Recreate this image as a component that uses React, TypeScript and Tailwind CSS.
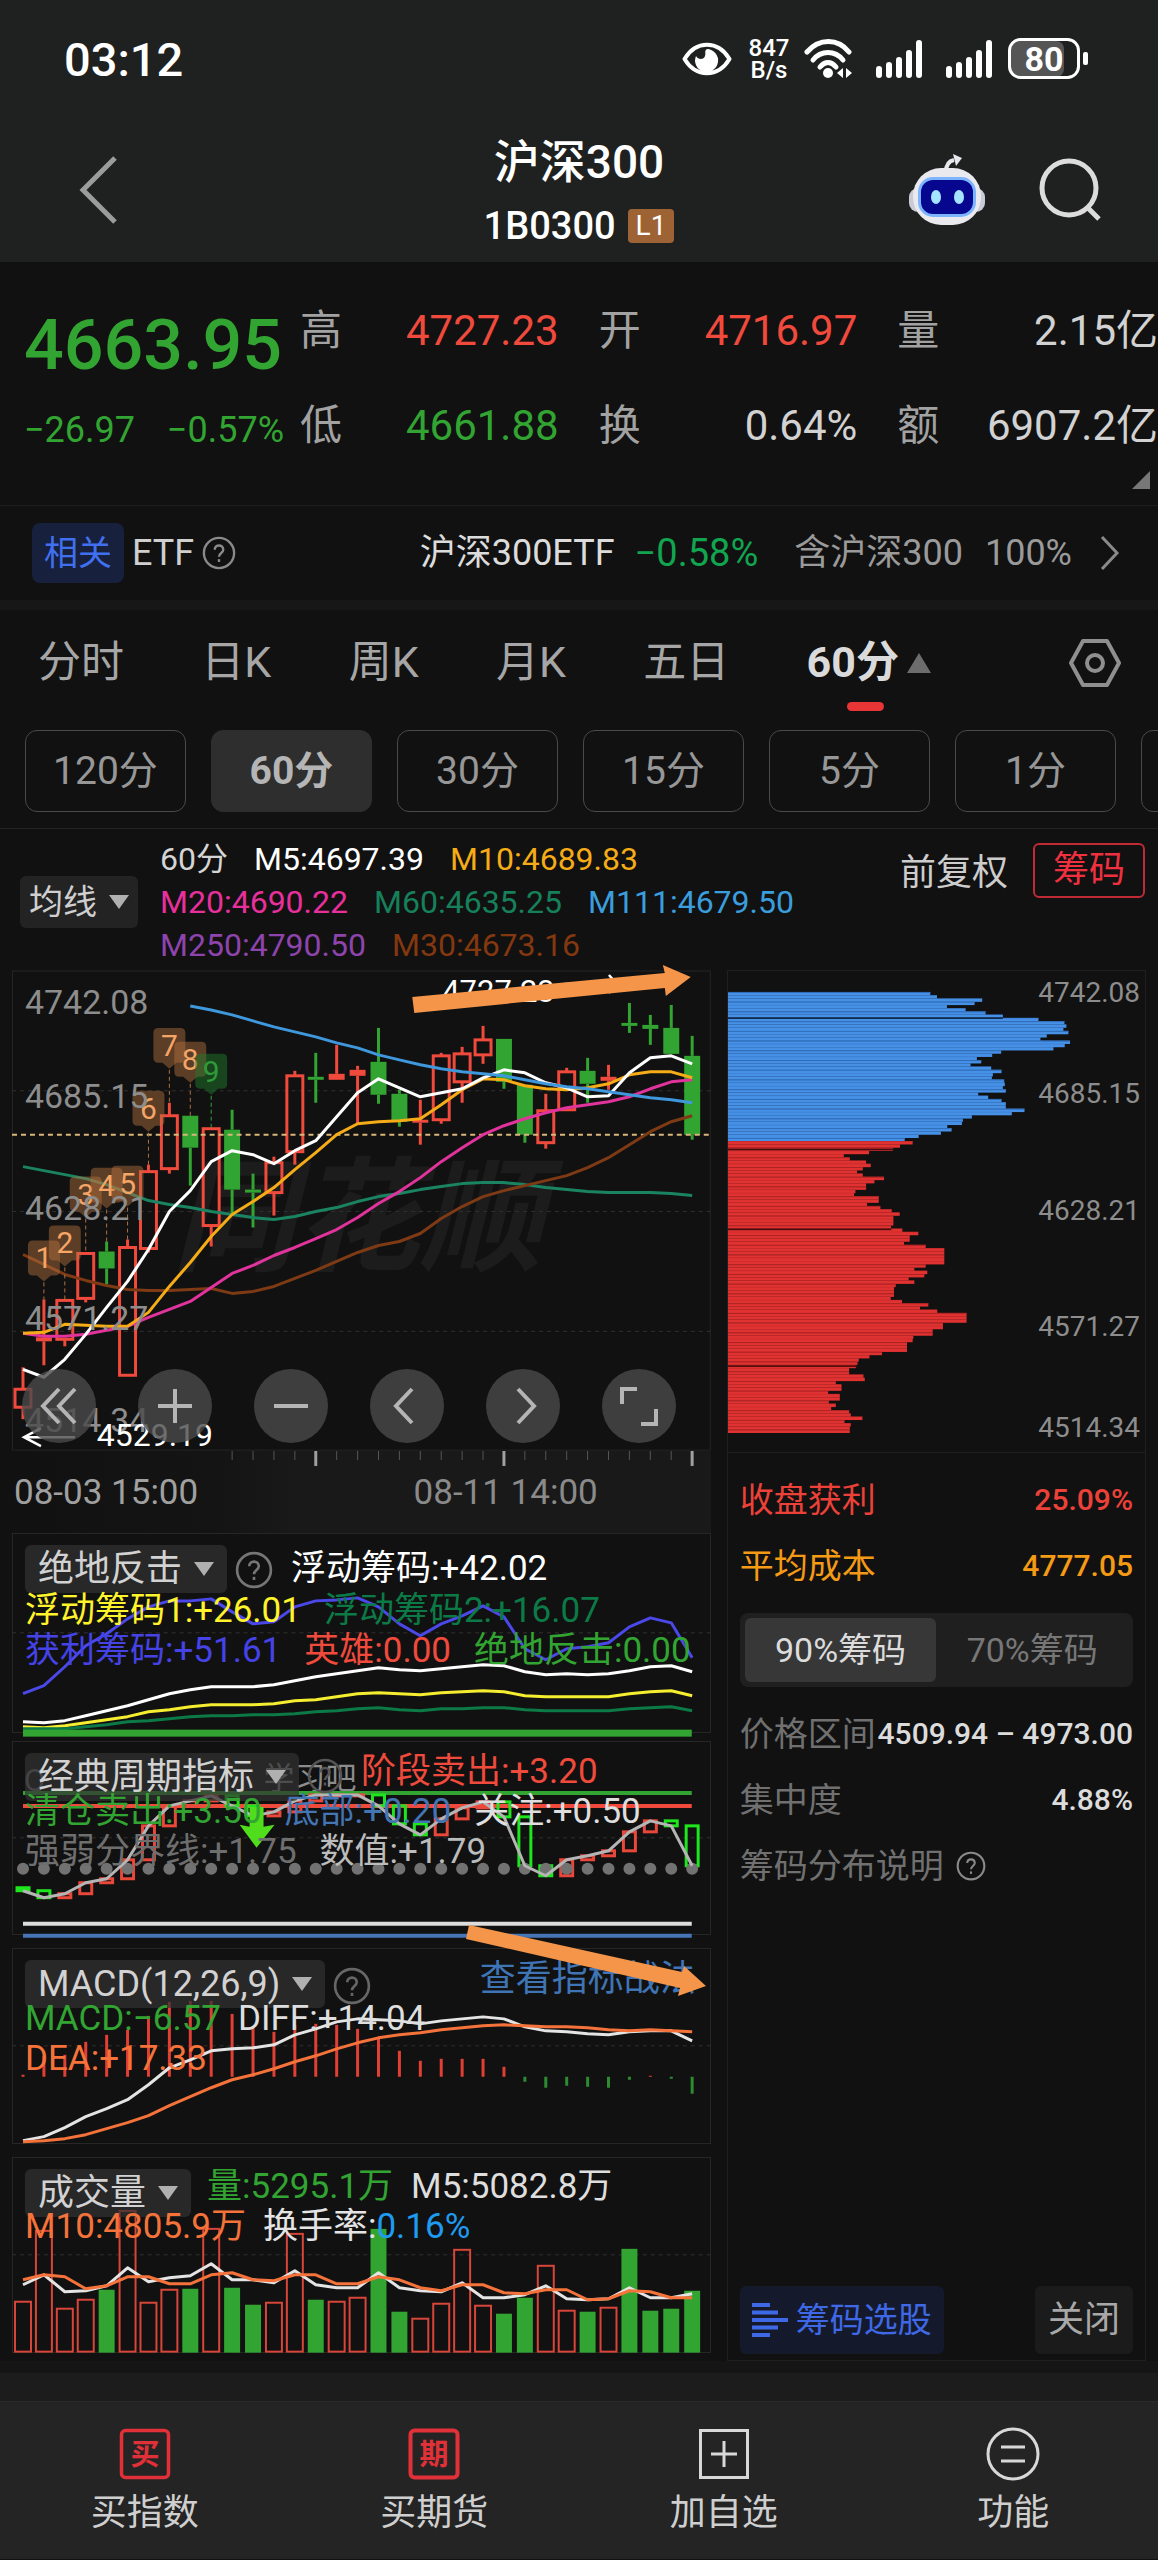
import type { ReactNode } from 'react'
import clsx from 'clsx'

const GREEN = '#32a432'
const RED = '#f04a3c'

type Candle = [high: number, top: number, bottom: number, low: number, kind: 'r' | 'g' | 'f']

// r = hollow up candle, g = solid down candle, f = flat up candle
const CANDLES: Candle[] = [
  [1368, 1390, 1408, 1420, 'r'],
  [1300, 1338, 1342, 1366, 'f'],
  [1300, 1301, 1340, 1347, 'r'],
  [1253, 1254, 1299, 1303, 'r'],
  [1242, 1252, 1269, 1285, 'g'],
  [1240, 1248, 1376, 1376, 'r'],
  [1165, 1172, 1249, 1253, 'r'],
  [1103, 1116, 1169, 1174, 'r'],
  [1116, 1116, 1148, 1186, 'g'],
  [1128, 1129, 1226, 1247, 'r'],
  [1110, 1130, 1190, 1215, 'g'],
  [1174, 1190, 1193, 1228, 'g'],
  [1157, 1163, 1193, 1216, 'r'],
  [1071, 1076, 1152, 1165, 'r'],
  [1053, 1077, 1080, 1103, 'g'],
  [1045, 1074, 1080, 1080, 'f'],
  [1066, 1070, 1076, 1124, 'f'],
  [1028, 1062, 1095, 1104, 'g'],
  [1090, 1094, 1122, 1127, 'g'],
  [1100, 1120, 1123, 1145, 'f'],
  [1053, 1056, 1120, 1124, 'r'],
  [1047, 1054, 1082, 1103, 'r'],
  [1026, 1040, 1055, 1064, 'r'],
  [1039, 1039, 1082, 1089, 'g'],
  [1085, 1085, 1135, 1143, 'g'],
  [1094, 1111, 1143, 1149, 'r'],
  [1068, 1072, 1110, 1110, 'r'],
  [1058, 1071, 1084, 1103, 'g'],
  [1065, 1077, 1081, 1090, 'f'],
  [1003, 1023, 1026, 1033, 'g'],
  [1015, 1025, 1029, 1045, 'g'],
  [1005, 1028, 1054, 1054, 'g'],
  [1036, 1056, 1135, 1140, 'g'],
]

const M5 = [1370, 1378, 1360, 1335, 1308, 1282, 1250, 1212, 1191, 1162, 1151, 1155, 1164, 1151, 1141, 1117, 1093, 1079, 1088, 1097, 1093, 1089, 1078, 1070, 1073, 1083, 1088, 1097, 1096, 1073, 1058, 1056, 1064]
const M10 = [1334, 1333, 1325, 1326, 1327, 1327, 1313, 1287, 1263, 1237, 1215, 1202, 1188, 1170, 1153, 1135, 1124, 1122, 1121, 1119, 1105, 1090, 1079, 1080, 1086, 1089, 1090, 1088, 1084, 1075, 1072, 1072, 1078]
const M20 = [1334, 1337, 1337, 1335, 1331, 1327, 1318, 1310, 1302, 1288, 1274, 1266, 1256, 1248, 1239, 1230, 1218, 1204, 1192, 1178, 1162, 1148, 1135, 1126, 1119, 1113, 1108, 1105, 1102, 1097, 1089, 1082, 1080]
const M30 = [1255, 1265, 1275, 1281, 1286, 1290, 1291, 1291, 1290, 1289, 1294, 1292, 1287, 1279, 1271, 1262, 1253, 1246, 1242, 1234, 1219, 1207, 1197, 1191, 1186, 1181, 1176, 1168, 1158, 1145, 1132, 1122, 1116]
const M60 = [1167, 1171, 1175, 1179, 1185, 1193, 1201, 1205, 1208, 1212, 1215, 1218, 1220, 1217, 1212, 1208, 1202, 1197, 1194, 1190, 1187, 1184, 1183, 1183, 1185, 1188, 1190, 1192, 1193, 1193, 1193, 1194, 1196]
const M111 = [1006, 1010, 1015, 1021, 1027, 1032, 1037, 1043, 1048, 1055, 1060, 1065, 1069, 1072, 1074, 1076, 1080, 1084, 1087, 1089, 1092, 1095, 1098, 1100, 1103]

const NINE_TURN = [1241, 1226, 1177, 1168, 1166, 1091, 1028, 1042, 1054]

const PROFIT = [1695, 1687, 1668, 1647, 1635, 1620, 1608, 1602, 1602, 1600, 1613, 1625, 1623, 1608, 1602, 1601, 1599, 1608, 1625, 1637, 1625, 1617, 1607, 1618, 1650, 1661, 1650, 1648, 1644, 1628, 1619, 1624, 1659]
const FLOAT0 = [1723, 1724, 1722, 1717, 1712, 1707, 1701, 1695, 1691, 1688, 1688, 1688, 1686, 1682, 1678, 1675, 1672, 1669, 1671, 1672, 1670, 1668, 1666, 1667, 1673, 1676, 1675, 1676, 1675, 1672, 1668, 1667, 1673]
const FLOAT1 = [1728, 1729, 1727, 1724, 1721, 1718, 1713, 1711, 1708, 1706, 1706, 1706, 1705, 1702, 1701, 1698, 1695, 1694, 1695, 1696, 1694, 1693, 1692, 1693, 1697, 1698, 1698, 1698, 1698, 1695, 1693, 1692, 1697]
const FLOAT2 = [1730, 1730, 1730, 1728, 1726, 1723, 1722, 1720, 1718, 1717, 1717, 1716, 1716, 1715, 1713, 1712, 1710, 1709, 1711, 1712, 1710, 1710, 1709, 1709, 1711, 1712, 1712, 1712, 1712, 1710, 1709, 1708, 1712]

const CYCLE = [1892, 1899, 1895, 1884, 1880, 1861, 1827, 1807, 1802, 1797, 1807, 1817, 1813, 1802, 1796, 1796, 1796, 1807, 1825, 1836, 1820, 1809, 1803, 1818, 1867, 1877, 1861, 1857, 1852, 1833, 1822, 1827, 1867]

const MACD = [2077, 2058, 2057, 2044, 2037, 2032, 2018, 2004, 2003, 2003, 2016, 2028, 2034, 2027, 2026, 2027, 2031, 2039, 2053, 2063, 2061, 2061, 2061, 2069, 2084, 2090, 2088, 2089, 2090, 2082, 2078, 2081, 2096]
const DIFF = [2143, 2139, 2130, 2119, 2111, 2102, 2087, 2070, 2062, 2053, 2051, 2050, 2047, 2037, 2031, 2024, 2021, 2022, 2023, 2026, 2023, 2021, 2019, 2021, 2029, 2033, 2034, 2036, 2037, 2034, 2033, 2033, 2043]
const DEA = [2144, 2143, 2141, 2137, 2131, 2125, 2118, 2108, 2099, 2090, 2082, 2077, 2071, 2064, 2058, 2051, 2045, 2040, 2037, 2035, 2032, 2030, 2028, 2027, 2028, 2029, 2029, 2030, 2032, 2033, 2032, 2033, 2034]

const VOLUME = [2304, 2233, 2311, 2302, 2292, 2213, 2305, 2292, 2291, 2231, 2290, 2307, 2305, 2236, 2302, 2304, 2300, 2231, 2314, 2321, 2306, 2252, 2308, 2316, 2300, 2268, 2313, 2314, 2310, 2251, 2313, 2311, 2293]
const VOLUME_SIDE = 'rrrrgrrrgrggrrgrrggrrrrggrrgrgggg'
const VOL_M5 = [2287, 2277, 2294, 2293, 2288, 2270, 2284, 2280, 2278, 2266, 2282, 2282, 2285, 2273, 2287, 2290, 2290, 2275, 2290, 2293, 2294, 2285, 2300, 2300, 2297, 2288, 2301, 2302, 2301, 2290, 2300, 2300, 2296]
const VOL_M10 = [2282, 2277, 2279, 2291, 2288, 2279, 2279, 2286, 2286, 2277, 2275, 2282, 2283, 2277, 2277, 2286, 2286, 2279, 2282, 2290, 2293, 2287, 2287, 2295, 2296, 2292, 2292, 2302, 2301, 2293, 2294, 2300, 2300]

const CHIPS_ABOVE = [662, 682, 818, 795, 712, 768, 828, 880, 987, 1065, 1071, 1062, 1077, 1012, 993, 1082, 1066, 1032, 875, 848, 802, 815, 783, 845, 876, 850, 847, 884, 886, 880, 889, 806, 836, 876, 889, 889, 945, 907, 787, 760, 757, 713, 726, 694, 627, 585]
const CHIPS_BELOW = [609, 571, 550, 478, 402, 420, 469, 483, 459, 442, 459, 523, 494, 469, 469, 437, 433, 507, 507, 472, 512, 546, 570, 551, 551, 551, 544, 578, 626, 600, 600, 583, 648, 704, 704, 704, 704, 704, 648, 614, 653, 644, 597, 614, 558, 553, 553, 553, 543, 577, 656, 631, 683, 771, 771, 771, 700, 700, 669, 669, 611, 609, 592, 592, 592, 517, 479, 447, 443, 438, 418, 418, 461, 465, 378, 395, 395, 355, 390, 390, 357, 378, 364, 418, 423, 458, 404, 423, 420, 420]

const PRICES = ['4742.08', '4685.15', '4628.21', '4571.27', '4514.34']

const colX = (i: number) => 23 + i * 20.95
const points = (ys: number[], start = 0) => ys.map((y, i) => `${colX(i + start)},${y}`).join(' ')

function Line({ ys, color, start = 0, width = 3 }: { ys: number[]; color: string; start?: number; width?: number }) {
  return <polyline points={points(ys, start)} fill="none" stroke={color} strokeWidth={width} strokeLinejoin="round" />
}

function MidLine({ y }: { y: number }) {
  return <line x1="12" x2="712" y1={y} y2={y} stroke="#303030" strokeWidth="1" strokeDasharray="4 4" />
}

function Question({ className }: { className?: string }) {
  return (
    <svg viewBox="0 0 36 36" className={clsx('shrink-0', className)} fill="none" stroke="currentColor" strokeWidth="2.5">
      <circle cx="18" cy="18" r="16" />
      <path d="M13.5 14.5c0-6 9-6 9 0 0 3.5-4.5 3.5-4.5 7.5" />
      <path d="M18 24.5v3" />
    </svg>
  )
}

function StatusBar() {
  return (
    <div className="flex h-[118px] items-center justify-between pl-16 pr-[68px] text-white">
      <time className="text-[47px] font-medium leading-none">03:12</time>
      <div className="flex items-center">
        <svg viewBox="0 0 50 36" className="h-9 w-[50px]">
          <path d="M2.5 18C14-1 36-1 47.5 18 36 37 14 37 2.5 18Z" fill="none" stroke="#fff" strokeWidth="4" strokeLinejoin="round" />
          <path d="M25 8a11.5 11.5 0 1 1-11 7c2 4 8 4 9 0 1-3-1-5 2-7Z" fill="#fff" />
        </svg>
        <span className="ml-4 w-[42px] text-center text-[24px] font-medium leading-[22px]">
          847
          <br />
          B/s
        </span>
        <svg viewBox="0 0 50 40" className="ml-[14px] h-10 w-[50px]" fill="none" stroke="#fff" strokeWidth="5" strokeLinecap="round">
          <path d="M3 13C15-1 34-1 45 13" />
          <path d="M9 21C17 11 31 11 39 21" />
          <path d="M16 28C21 22 27 22 32 28" />
          <circle cx="24" cy="34" r="5" fill="#fff" stroke="none" />
          <path d="M39 29v10l-6-5zM42 29v10l6-5z" fill="#fff" stroke="none" />
        </svg>
        <Signal />
        <Signal />
        <svg viewBox="0 0 82 42" className="ml-[14px] h-[42px] w-[82px]">
          <rect x="3" y="3" width="53" height="36" rx="8" fill="#555" />
          <rect x="1.5" y="1.5" width="69" height="38" rx="11" fill="none" stroke="#fff" strokeWidth="3" />
          <rect x="75" y="14" width="5" height="13" rx="2" fill="#fff" />
          <text x="36" y="33" textAnchor="middle" fontSize="34" fontWeight="700" fill="#fff">80</text>
        </svg>
      </div>
    </div>
  )
}

function Signal() {
  return (
    <svg viewBox="0 0 48 38" className="ml-[22px] h-[38px] w-12" fill="#fff">
      {[12, 16, 21, 28, 38].map((h, i) => (
        <rect key={h} x={i * 10} y={38 - h} width="6" height={h} rx="3" />
      ))}
    </svg>
  )
}

function Header() {
  return (
    <header className="bg-[#1f2120]">
      <StatusBar />
      <div className="grid h-36 grid-cols-[1fr_auto_1fr] items-center px-14">
        <button aria-label="返回" className="ml-[22px] justify-self-start text-[#9c9c9c]">
          <svg viewBox="0 0 40 70" className="h-[70px] w-10" fill="none" stroke="currentColor" strokeWidth="5">
            <path d="M37 3 5 35l32 32" />
          </svg>
        </button>
        <div className="pt-2 text-center text-white">
          <h1 className="text-[46px] font-medium leading-[64px]">沪深300</h1>
          <p className="flex items-center justify-center gap-3 text-[38px] font-medium leading-[64px]">
            1B0300
            <span className="rounded-sm bg-[#9d6334] px-2 text-[28px] font-normal leading-[34px]">L1</span>
          </p>
        </div>
        <div className="flex items-center gap-[52px] justify-self-end">
          <button aria-label="智能助手">
            <svg viewBox="0 0 78 72" className="h-[72px] w-[78px]">
              <path d="M38 18c0-8 3-11 8-12" fill="none" stroke="#e8e8ec" strokeWidth="4" />
              <path d="M45 0l9 4-6 8z" fill="#e8e8ec" />
              <rect x="1" y="34" width="76" height="24" rx="9" fill="#c9cbd6" />
              <rect x="5" y="14" width="68" height="57" rx="28" fill="#e9e9ee" />
              <rect x="10" y="23" width="58" height="40" rx="15" fill="#7db4ff" />
              <rect x="13" y="26" width="52" height="34" rx="12" fill="#06068f" />
              <ellipse cx="28" cy="43" rx="5" ry="7" fill="#a5e4ff" />
              <ellipse cx="51" cy="43" rx="5" ry="7" fill="#a5e4ff" />
            </svg>
          </button>
          <button aria-label="搜索">
            <svg viewBox="0 0 64 64" className="size-16" fill="none" stroke="#dcdcdc" strokeWidth="5">
              <circle cx="31" cy="30" r="27" />
              <path d="M50 50l11 11" />
            </svg>
          </button>
        </div>
      </div>
    </header>
  )
}

function Quote({ label, value, valueClass = 'text-[#d2d2d2]' }: { label: string; value: string; valueClass?: string }) {
  return (
    <div className="flex justify-between">
      <dt className="text-[#a2a2a2]">{label}</dt>
      <dd className={valueClass}>{value}</dd>
    </div>
  )
}

function QuotePanel() {
  return (
    <section className="relative flex h-[244px] gap-4 overflow-hidden border-b border-[#1d1d1d] pl-6 pt-[38px]">
      <div className="w-[260px] shrink-0 text-[#32a432]">
        <p className="text-[70px] font-medium leading-[90px]">4663.95</p>
        <p className="flex justify-between pt-3 text-[36px] leading-[56px]">
          <span>−26.97</span>
          <span>−0.57%</span>
        </p>
      </div>
      <dl className="grid flex-1 grid-cols-[258fr_258fr_260fr] content-start gap-x-10 text-[42px] leading-[62px]">
        <Quote label="高" value="4727.23" valueClass="text-[#f04a3c]" />
        <Quote label="开" value="4716.97" valueClass="text-[#f04a3c]" />
        <Quote label="量" value="2.15亿" />
        <div className="col-span-3 grid grid-cols-subgrid pt-[33px]">
          <Quote label="低" value="4661.88" valueClass="text-[#32a432]" />
          <Quote label="换" value="0.64%" />
          <Quote label="额" value="6907.2亿" />
        </div>
      </dl>
      <svg viewBox="0 0 18 18" className="absolute bottom-4 right-2 size-[18px]">
        <path d="M18 0v18H0z" fill="#777" />
      </svg>
    </section>
  )
}

function EtfRow() {
  return (
    <a href="#etf" className="flex h-[94px] items-center pl-8 pr-[38px] text-[36px]">
      <span className="rounded-lg bg-[#17203c] px-3 text-[34px] leading-[60px] text-[#4070f0]">相关</span>
      <span className="ml-2 text-[#cfcfcf]">ETF</span>
      <Question className="ml-2 size-[34px] text-[#8a8a8a]" />
      <span className="ml-auto text-[#dcdcdc]">沪深300ETF</span>
      <span className="ml-5 text-[38px] text-[#12a550]">−0.58%</span>
      <span className="ml-9 text-[#9a9a9a]">含沪深300</span>
      <span className="ml-[22px] text-[#9a9a9a]">100%</span>
      <svg viewBox="0 0 20 36" className="ml-7 h-9 w-5" fill="none" stroke="#8a8a8a" strokeWidth="3">
        <path d="M2 2l15 16L2 34" />
      </svg>
    </a>
  )
}

function PeriodTabs() {
  return (
    <nav className="flex h-[120px] items-center pb-[15px] pl-[38px] pr-[37px] text-[43px] text-[#a6a6a6]">
      <div className="flex flex-1 items-center justify-between">
        {['分时', '日K', '周K', '月K', '五日'].map((tab) => (
          <button key={tab}>{tab}</button>
        ))}
        <button className="relative flex items-center gap-2 font-bold text-[#dadada]">
          60分
          <svg viewBox="0 0 24 20" className="h-5 w-6">
            <path d="M12 0l12 20H0z" fill="#6d6d6d" />
          </svg>
          <span className="absolute -bottom-4 left-10 h-[9px] w-[37px] rounded-full bg-[#e83535]" />
        </button>
      </div>
      <button aria-label="图表设置" className="ml-[138px]">
        <svg viewBox="0 0 52 48" className="h-12 w-[52px]" fill="none" stroke="#8f8f8f" strokeWidth="4" strokeLinejoin="round">
          <path d="M14 2h24l12 22-12 22H14L2 24z" />
          <circle cx="26" cy="24" r="8" />
        </svg>
      </button>
    </nav>
  )
}

function MinutePills() {
  return (
    <div className="flex h-[99px] gap-[25px] overflow-hidden border-b border-[#242424] pl-[25px] text-[39px]">
      {['120分', '60分', '30分', '15分', '5分', '1分'].map((p) => (
        <button
          key={p}
          className={clsx(
            'h-[82px] w-[161px] shrink-0 rounded-xl border',
            p === '60分' ? 'border-[#2e2e2e] bg-[#2e2e2e] font-bold text-[#b5b5b5]' : 'border-[#4a4a4a] text-[#979797]',
          )}
        >
          {p}
        </button>
      ))}
      <button aria-label="更多周期" className="h-[82px] w-[161px] shrink-0 rounded-xl border border-[#4a4a4a]" />
    </div>
  )
}

function Caret() {
  return (
    <svg viewBox="0 0 20 14" className="h-[14px] w-5 shrink-0">
      <path d="M0 0h20L10 14z" fill="#b0b0b0" />
    </svg>
  )
}

function AverageRow() {
  return (
    <section className="flex h-[141px] pl-5 pr-[13px] pt-[9px]">
      <button className="mt-[38px] flex h-[52px] items-center gap-3 rounded-md bg-[#232323] px-[9px] text-[34px] text-[#cfcfcf]">
        均线
        <Caret />
      </button>
      <p className="ml-[22px] flex-1 text-[32px] leading-[43px]">
        <span className="mr-[26px] text-[#d5d5d5]">60分</span>
        <span className="mr-[26px] text-white">M5:4697.39</span>
        <span className="text-[#f5ac16]">M10:4689.83</span>
        <br />
        <span className="mr-[26px] text-[#e8309c]">M20:4690.22</span>
        <span className="mr-[26px] text-[#16805a]">M60:4635.25</span>
        <span className="text-[#3a9ede]">M111:4679.50</span>
        <br />
        <span className="mr-[26px] text-[#8e44ad]">M250:4790.50</span>
        <span className="text-[#83380f]">M30:4673.16</span>
      </p>
      <div className="flex items-start gap-[25px] text-[36px] leading-[54px]">
        <button className="pt-2 text-[#cdcdcd]">前复权</button>
        <button className="mt-[5px] rounded-md border-2 border-[#c02a34] px-[18px] leading-[51px] text-[#f0303f]">筹码</button>
      </div>
    </section>
  )
}

function CandleChart() {
  return (
    <svg viewBox="12 970 700 482" className="col-start-1 row-start-1 w-full overflow-visible">
      <rect x="12.5" y="971" width="699" height="480" fill="none" stroke="#262626" />
      <text x="172" y="1262" fontSize="124" fontWeight="700" fontStyle="italic" fill="#1c1c1c">同花顺</text>
      <MidLine y={1091} />
      <MidLine y={1212} />
      <MidLine y={1332} />
      {CANDLES.map(([high, top, bottom, low, kind], i) => {
        const x = colX(i)
        const color = kind === 'g' ? GREEN : RED
        return (
          <g key={i} stroke={color} strokeWidth="3">
            <line x1={x} x2={x} y1={high} y2={top} />
            <line x1={x} x2={x} y1={bottom} y2={low} />
            {kind === 'r' ? (
              <rect x={x - 8} y={top} width="16" height={bottom - top} fill="none" />
            ) : (
              <rect x={x - 8} y={top} width="16" height={bottom - top} fill={color} stroke="none" />
            )}
          </g>
        )
      })}
      <line x1="12" x2="712" y1="1135" y2="1135" stroke="#d9b67a" strokeWidth="2" strokeDasharray="5 4" />
      <Line ys={M60} color="#1a8462" />
      <Line ys={M30} color="#7d3a14" />
      <Line ys={M20} color="#e0339c" />
      <Line ys={M10} color="#f5ac16" />
      <Line ys={M5} color="#fff" />
      <Line ys={M111} color="#3f97dc" start={8} />
      {NINE_TURN.map((top, i) => {
        const x = colX(i + 1)
        const last = i === 8
        const color = last ? '#2f9a3a' : '#f5a565'
        return (
          <g key={i}>
            <line x1={x} x2={x} y1={top + 42} y2={CANDLES[i + 1][0]} stroke={last ? GREEN : '#b0703f'} strokeDasharray="4 3" />
            <path
              d={`M${x - 11} ${top}h22q5 0 5 5v25q0 5-5 5h-4l-7 6-7-6h-4q-5 0-5-5v-25q0-5 5-5z`}
              fill={last ? '#1f7a2c' : '#b87440'}
              fillOpacity={last ? 0.5 : 0.45}
            />
            <text x={x} y={top + 28} textAnchor="middle" fontSize="30" fill={color}>{i + 1}</text>
          </g>
        )
      })}
      {PRICES.map((p, i) => (
        <text key={p} x="25" y={[1014, 1108, 1220, 1331, 1433][i]} fontSize="34" fill="#8d8d8d">{p}</text>
      ))}
      <text x="443" y="1002" fontSize="31" fill="#fff">4727.23</text>
      <text x="97" y="1447" fontSize="32" fill="#fff">4529.19</text>
      <path d="M75 1438H24m17-9-17 9 17 9M566 984h52m-8-9 8 9-8 9" fill="none" stroke="#fff" strokeWidth="2.5" />
      <path d="M413 997l253-24-2-8 28 12-25 19-1-8-251 25z" fill="#f4954a" />
    </svg>
  )
}

const CONTROLS: { label: string; d: string }[] = [
  { label: '最早', d: 'M37 20 21 37l16 17M53 20 37 37l16 17' },
  { label: '放大', d: 'M37 20v34M20 37h34' },
  { label: '缩小', d: 'M20 37h34' },
  { label: '向左', d: 'M42 20 26 37l16 17' },
  { label: '向右', d: 'M32 20l16 17-16 17' },
  { label: '全屏', d: 'M35 20H20v15M39 55h15V40' },
]

function MainChart() {
  return (
    <div className="grid">
      <CandleChart />
      <div className="z-10 col-start-1 row-start-1 flex items-end justify-between pb-2 pl-[10px] pr-[35px]">
        {CONTROLS.map((c) => (
          <button key={c.label} aria-label={c.label} className="size-[74px] rounded-full bg-[#4a4a4a]/80">
            <svg viewBox="0 0 74 74" fill="none" stroke="#b5b5b5" strokeWidth="4">
              <path d={c.d} />
            </svg>
          </button>
        ))}
      </div>
    </div>
  )
}

function TimeAxis() {
  return (
    <div className="h-[82px] bg-linear-to-r from-[#111] via-[#141414] via-30% to-[#191919] to-40%">
      <svg viewBox="12 1452 700 16" className="w-full">
        {Array.from({ length: 23 }, (_, i) => {
          const major = i % 9 === 4
          const x = colX(i + 10)
          return <line key={i} x1={x} x2={x} y1="1452" y2={major ? 1467 : 1461} stroke={major ? '#a0a0a0' : '#555'} strokeWidth={major ? 3 : 1} />
        })}
      </svg>
      <p className="flex justify-between pl-[2px] pr-[113px] text-[35px] leading-[52px]">
        <time className="text-[#a0a0a0]">08-03 15:00</time>
        <time className="text-[#8a8a8a]">08-11 14:00</time>
      </p>
    </div>
  )
}

function Indicator({ chart, children }: { chart: ReactNode; children: ReactNode }) {
  return (
    <section className="relative grid border border-[#262626]">
      <div className="col-start-1 row-start-1">{chart}</div>
      <div className="z-10 col-start-1 row-start-1 h-0 whitespace-nowrap pl-3 text-[35px]">{children}</div>
    </section>
  )
}

function IndicatorButton({ children }: { children: ReactNode }) {
  return (
    <button className="mt-[11px] flex h-12 items-center gap-3 rounded-md bg-[#323232]/70 px-[13px] text-[36px] text-[#d2d2d2]">
      {children}
      <Caret />
    </button>
  )
}

function FloatChips() {
  return (
    <Indicator
      chart={
        <svg viewBox="13 1535 698 198" className="w-full overflow-visible">
          <MidLine y={1634} />
          <Line ys={PROFIT} color="#4a48e8" />
          <Line ys={FLOAT0} color="#fff" />
          <Line ys={FLOAT1} color="#f5ee30" />
          <Line ys={FLOAT2} color="#0c7a46" />
          <rect x="23" y="1731" width="670" height="7" fill={GREEN} />
        </svg>
      }
    >
      <div className="flex h-[57px] items-start leading-[70px]">
        <IndicatorButton>绝地反击</IndicatorButton>
        <Question className="ml-2 mt-[17px] size-[38px] text-[#767676]" />
        <span className="ml-[18px] text-white">浮动筹码:+42.02</span>
      </div>
      <div className="flex gap-[23px] leading-10">
        <span className="text-[#fff32b]">浮动筹码1:+26.01</span>
        <span className="text-[#0c7a46]">浮动筹码2:+16.07</span>
      </div>
      <div className="flex gap-[23px] leading-10">
        <span className="text-[#4543e6]">获利筹码:+51.61</span>
        <span className="text-[#f04a3c]">英雄:0.00</span>
        <span className="text-[#32a432]">绝地反击:0.00</span>
      </div>
    </Indicator>
  )
}

function CycleIndicator() {
  return (
    <Indicator
      chart={
        <svg viewBox="13 1743 698 193" className="w-full overflow-visible">
          <MidLine y={1839} />
          <text x="24" y="1792" fontSize="31" fill="#6c6c6c">Q</text>
          <text x="264" y="1790" fontSize="31" fill="#8c8c8c">学习吧</text>
          <line x1="23" x2="693" y1="1794" y2="1794" stroke={GREEN} strokeWidth="4" />
          <line x1="23" x2="693" y1="1807" y2="1807" stroke={RED} strokeWidth="4" />
          {CYCLE.map((y, i) => {
            const prev = CYCLE[i - 1] ?? y - 3
            return (
              <rect
                key={i}
                x={colX(i) - 6}
                y={Math.min(prev, y)}
                width="12"
                height={Math.max(Math.abs(y - prev), 1)}
                fill="none"
                stroke={y > prev ? '#1ee61e' : '#e8473a'}
                strokeWidth="3"
              />
            )
          })}
          {CYCLE.map((_, i) => (
            <circle key={i} cx={colX(i)} cy="1870" r="6" fill="#727272" />
          ))}
          <Line ys={CYCLE} color="#b5b5b5" />
          <line x1="23" x2="693" y1="1925" y2="1925" stroke="#ddd" strokeWidth="4" />
          <line x1="23" x2="693" y1="1937" y2="1937" stroke="#4675b5" strokeWidth="4" />
          <path d="M250 1808h14v20l11-2-18 23-17-23 10 2z" fill="#4fdd1c" />
        </svg>
      }
    >
      <div className="flex h-[50px] items-start leading-[60px]">
        <IndicatorButton>经典周期指标</IndicatorButton>
        <Question className="ml-2 mt-4 size-9 text-[#555]" />
        <span className="ml-[18px] text-[#f04a3c]">阶段卖出:+3.20</span>
      </div>
      <div className="flex gap-[23px] leading-10">
        <span className="text-[#32a432]">清仓卖出:+3.50</span>
        <span className="text-[#4374b4]">底部:+0.20</span>
        <span className="text-[#dedede]">关注:+0.50</span>
      </div>
      <div className="flex gap-[23px] leading-10">
        <span className="text-[#6e6e6e]">强弱分界线:+1.75</span>
        <span className="text-[#bcbcbc]">数值:+1.79</span>
      </div>
    </Indicator>
  )
}

function MacdIndicator() {
  return (
    <Indicator
      chart={
        <svg viewBox="13 1951 698 194" className="w-full overflow-visible">
          <MidLine y={2048} />
          {MACD.map((y, i) => (
            <line key={i} x1={colX(i)} x2={colX(i)} y1="2079" y2={y} stroke={y > 2079 ? '#2b8c30' : '#e04034'} strokeWidth="3" />
          ))}
          <Line ys={DIFF} color="#e4e4e4" />
          <Line ys={DEA} color="#f5733a" />
        </svg>
      }
    >
      <div className="flex h-[50px] items-start leading-[60px]">
        <IndicatorButton>MACD(12,26,9)</IndicatorButton>
        <Question className="ml-2 mt-[18px] size-[38px] text-[#666]" />
        <a href="#macd" className="ml-auto mr-[14px] text-[36px] text-[#3f74b5]">查看指标战法</a>
      </div>
      <div className="flex gap-[17px] leading-10">
        <span className="text-[#32a432]">MACD:−6.57</span>
        <span className="text-[#dedede]">DIFF:+14.04</span>
      </div>
      <div className="leading-10 text-[#f5733a]">DEA:+17.33</div>
      <svg viewBox="0 0 240 71" className="absolute -top-6 right-1 w-[240px]">
        <path d="M3 0l213 47 2-6 22 20-28 10 2-8L0 14z" fill="#f4954a" />
      </svg>
    </Indicator>
  )
}

function VolumeIndicator() {
  return (
    <Indicator
      chart={
        <svg viewBox="13 2160 698 194" className="w-full overflow-visible">
          <MidLine y={2257} />
          {VOLUME.map((y, i) =>
            VOLUME_SIDE[i] === 'g' ? (
              <rect key={i} x={colX(i) - 8} y={y} width="16" height={2355 - y} fill={GREEN} />
            ) : (
              <rect key={i} x={colX(i) - 8} y={y} width="16" height={2354 - y} fill="none" stroke="#d84539" strokeWidth="2" />
            ),
          )}
          <Line ys={VOL_M5} color="#e4e4e4" />
          <Line ys={VOL_M10} color="#f5733a" />
        </svg>
      }
    >
      <div className="flex h-[49px] items-start leading-[58px]">
        <IndicatorButton>成交量</IndicatorButton>
        <span className="ml-4 text-[#32a432]">量:5295.1万</span>
        <span className="ml-[18px] text-[#dedede]">M5:5082.8万</span>
      </div>
      <div className="flex gap-[17px] leading-10">
        <span className="text-[#f5733a]">M10:4805.9万</span>
        <span className="text-[#e4e4e4]">
          换手率:<span className="text-[#1e9bf0]">0.16%</span>
        </span>
      </div>
    </Indicator>
  )
}

function ChipHistogram() {
  const rows = [...CHIPS_ABOVE, ...CHIPS_BELOW]
  const step = 1325 / rows.length
  const gaps: [number, number, string][] = [
    [169, 880, '#0e2340'],
    [564, 550, '#4a0c0c'],
    [804, 545, '#4a0c0c'],
    [1215, 443, '#4a0c0c'],
  ]
  return (
    <svg viewBox="54 30 1254 1446" className="w-full border-b border-[#1f1f1f]">
      {rows.map((right, i) => {
        const above = i < CHIPS_ABOVE.length
        const y = 93 + i * step
        return (
          <g key={i}>
            <rect x="54" y={y} width={right - 54} height={step + 0.5} fill={above ? '#4690e6' : '#e13232'} />
            <rect x="54" y={y} width={right - 54} height={i % 3 ? 1 : 3} fill={above ? '#2f6cb8' : '#ac2424'} />
          </g>
        )
      })}
      {gaps.map(([y, right, fill]) => (
        <rect key={y} x="54" y={y} width={right - 54} height="5" fill={fill} />
      ))}
      {PRICES.map((p, i) => (
        <text key={p} x="1292" y={[123, 426, 777, 1128, 1431][i]} textAnchor="end" fontSize="84" fill="#8d8d8d">{p}</text>
      ))}
    </svg>
  )
}

function ChipRow({ label, value, className, valueClass }: { label: string; value: string; className: string; valueClass?: string }) {
  return (
    <div className={clsx('flex items-center justify-between whitespace-nowrap leading-[66px]', className)}>
      <dt>{label}</dt>
      <dd className={clsx('text-[30px] font-medium', valueClass)}>{value}</dd>
    </div>
  )
}

function ChipPanel() {
  return (
    <aside className="flex min-w-0 flex-[418] flex-col border border-[#1f1f1f]">
      <ChipHistogram />
      <div className="flex flex-1 flex-col px-3 pb-[6px] pt-[14px] text-[34px]">
        <dl>
          <ChipRow label="收盘获利" value="25.09%" className="text-[#ec4138]" />
          <ChipRow label="平均成本" value="4777.05" className="text-[#f59a14]" />
        </dl>
        <div className="my-[14px] flex rounded-lg bg-[#1f1f1f] p-[5px] leading-[64px]">
          <button className="flex-1 rounded-md bg-[#373737] text-[#dcdcdc]">90%筹码</button>
          <button className="flex-1 text-[#777]">70%筹码</button>
        </div>
        <dl>
          <ChipRow label="价格区间" value="4509.94 – 4973.00" className="text-[#707070]" valueClass="text-[#dcdcdc]" />
          <ChipRow label="集中度" value="4.88%" className="text-[#707070]" valueClass="text-[#dcdcdc]" />
        </dl>
        <button className="flex items-center gap-3 leading-[66px] text-[#707070]">
          筹码分布说明
          <Question className="size-[30px] text-[#8a8a8a]" />
        </button>
        <div className="mt-auto flex justify-between leading-[68px]">
          <button className="flex items-center gap-2 rounded-md bg-[#141a2b] px-3 text-[#3f68e6]">
            <svg viewBox="0 0 36 34" className="h-[34px] w-9" stroke="currentColor" strokeWidth="4">
              <path d="M0 2h18M0 9.5h26M0 17h36M0 24.5h26M0 32h18" />
            </svg>
            筹码选股
          </button>
          <button className="rounded-md bg-[#1b1b1b] px-[13px] text-[36px] text-[#a8a8a8]">关闭</button>
        </div>
      </div>
    </aside>
  )
}

function NavItem({ label, children }: { label: string; children: ReactNode }) {
  return (
    <button className="flex flex-1 flex-col items-center gap-[6px] pt-[25px] text-[36px] leading-[52px] text-[#cfcfcf]">
      <svg viewBox="0 0 54 54" className="size-[54px]" fill="none">
        {children}
      </svg>
      {label}
    </button>
  )
}

function BottomNav() {
  return (
    <nav className="flex h-[158px] border-t border-[#2a2a2a] bg-[#242424]">
      <NavItem label="买指数">
        <rect x="3.5" y="3.5" width="47" height="47" rx="4" stroke="#e03038" strokeWidth="3.5" />
        <text x="27" y="38" textAnchor="middle" fontSize="29" fontWeight="700" fill="#e03038">买</text>
      </NavItem>
      <NavItem label="买期货">
        <rect x="3.5" y="3.5" width="47" height="47" rx="4" stroke="#e03038" strokeWidth="4" />
        <text x="27" y="38" textAnchor="middle" fontSize="29" fontWeight="700" fill="#e03038">期</text>
      </NavItem>
      <NavItem label="加自选">
        <path d="M3.5 3.5h47v47h-47zM27 14v26M14 27h26" stroke="#d8d8d8" strokeWidth="3" />
      </NavItem>
      <NavItem label="功能">
        <circle cx="27" cy="27" r="25" stroke="#d8d8d8" strokeWidth="3" />
        <path d="M15 20h24M15 34h24" stroke="#d8d8d8" strokeWidth="3" />
      </NavItem>
    </nav>
  )
}

export default function App() {
  return (
    <div className="min-h-screen overflow-hidden bg-[#111] font-['Roboto','Noto_Sans_CJK_SC',sans-serif]">
      <Header />
      <QuotePanel />
      <EtfRow />
      <div className="h-[10px] bg-[#171717]" />
      <PeriodTabs />
      <MinutePills />
      <AverageRow />
      <main className="flex gap-4 px-3">
        <div className="min-w-0 flex-[700] pb-2">
          <MainChart />
          <TimeAxis />
          <FloatChips />
          <div className="pt-2">
            <CycleIndicator />
          </div>
          <div className="pt-[13px]">
            <MacdIndicator />
          </div>
          <div className="pt-[13px]">
            <VolumeIndicator />
          </div>
        </div>
        <ChipPanel />
      </main>
      <div className="h-3 bg-[#151515]" />
      <div className="h-7 bg-[#1c1c1c]" />
      <BottomNav />
    </div>
  )
}
